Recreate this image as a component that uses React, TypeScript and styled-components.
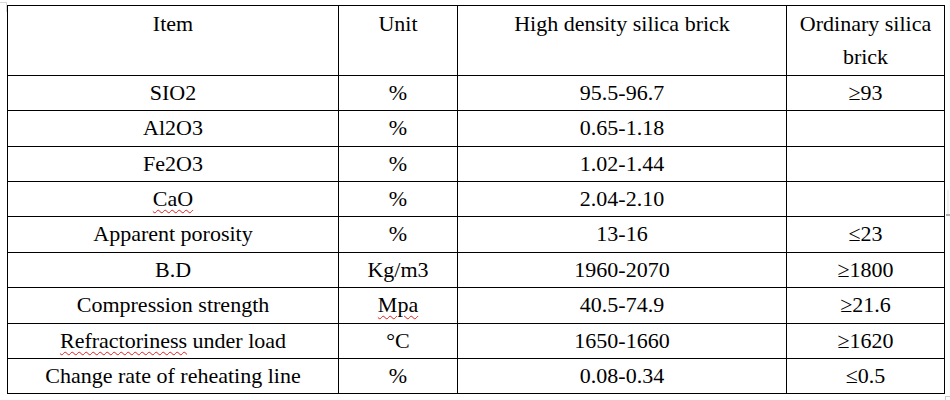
import React from 'react';
import styled, { createGlobalStyle } from 'styled-components';

const GlobalStyle = createGlobalStyle`
    html, body {
        margin: 0;
        padding: 0;
        background: #ffffff;
    }
    body {
        width: 950px;
        height: 400px;
        overflow: hidden;
    }
`

const Page = styled.div`
    position: relative;
    width: 950px;
    height: 400px;
    padding: 5px 0 0 7px;
    box-sizing: border-box;
    font-family: "Liberation Serif", "Times New Roman", serif;
    color: #000000;
`

const Table = styled.div`
    display: grid;
    grid-template-columns: 330px 118px 328px 157px;
    grid-template-rows: 69px 34px 35px 34px 34px 35px 34px 35px 34px 34px;
    gap: 1px;
    padding: 1px;
    width: 938px;
    box-sizing: border-box;
    background: #000000;
`

const Cell = styled.div<{ $head?: boolean }>`
    background: #ffffff;
    text-align: center;
    font-size: 22px;
    line-height: 33px;
    padding-top: ${p => (p.$head ? '1px' : '0')};
    overflow: hidden;
    white-space: ${p => (p.$head ? 'normal' : 'nowrap')};
`

const Squiggle = styled.span`
    text-decoration-line: underline;
    text-decoration-style: wavy;
    text-decoration-color: #e0201c;
    text-decoration-thickness: 1px;
    text-underline-offset: 3px;
`

const CornerMark = styled.div`
    position: absolute;
    left: 0;
    top: 0;
    width: 6px;
    height: 9px;
    border-right: 1px solid #d8d8d8;
    border-top: 1px solid #d8d8d8;
    transform: translateY(2px);
`

const SideHandle = styled.div`
    position: absolute;
    left: 947px;
    top: 190px;
    width: 2px;
    height: 26px;
    background: #f0f0f0;
    &::after {
        content: '';
        position: absolute;
        left: -1px;
        bottom: 0;
        width: 4px;
        height: 2px;
        background: #b0b0b0;
    }
`

const ResizeHandle = styled.div`
    position: absolute;
    left: 945px;
    top: 396px;
    width: 5px;
    height: 4px;
    border-left: 1px solid #c8c8c8;
    border-top: 1px solid #c8c8c8;
    box-sizing: border-box;
`

type Row = [React.ReactNode, React.ReactNode, string, string];

const rows: Row[] = [
    ['SIO2', '%', '95.5-96.7', '≥93'],
    ['Al2O3', '%', '0.65-1.18', ''],
    ['Fe2O3', '%', '1.02-1.44', ''],
    [<Squiggle>CaO</Squiggle>, '%', '2.04-2.10', ''],
    ['Apparent porosity', '%', '13-16', '≤23'],
    ['B.D', 'Kg/m3', '1960-2070', '≥1800'],
    ['Compression strength', <Squiggle>Mpa</Squiggle>, '40.5-74.9', '≥21.6'],
    [<><Squiggle>Refractoriness</Squiggle> under load</>, '°C', '1650-1660', '≥1620'],
    ['Change rate of reheating line', '%', '0.08-0.34', '≤0.5'],
];

export default function App() {
    return (
        <>
            <GlobalStyle />
            <Page>
                <CornerMark />
                <Table>
                    <Cell $head>Item</Cell>
                    <Cell $head>Unit</Cell>
                    <Cell $head>High density silica brick</Cell>
                    <Cell $head>Ordinary silica brick</Cell>
                    {rows.map((r, i) => (
                        <React.Fragment key={i}>
                            <Cell>{r[0]}</Cell>
                            <Cell>{r[1]}</Cell>
                            <Cell>{r[2]}</Cell>
                            <Cell>{r[3]}</Cell>
                        </React.Fragment>
                    ))}
                </Table>
                <SideHandle />
                <ResizeHandle />
            </Page>
        </>
    );
}
